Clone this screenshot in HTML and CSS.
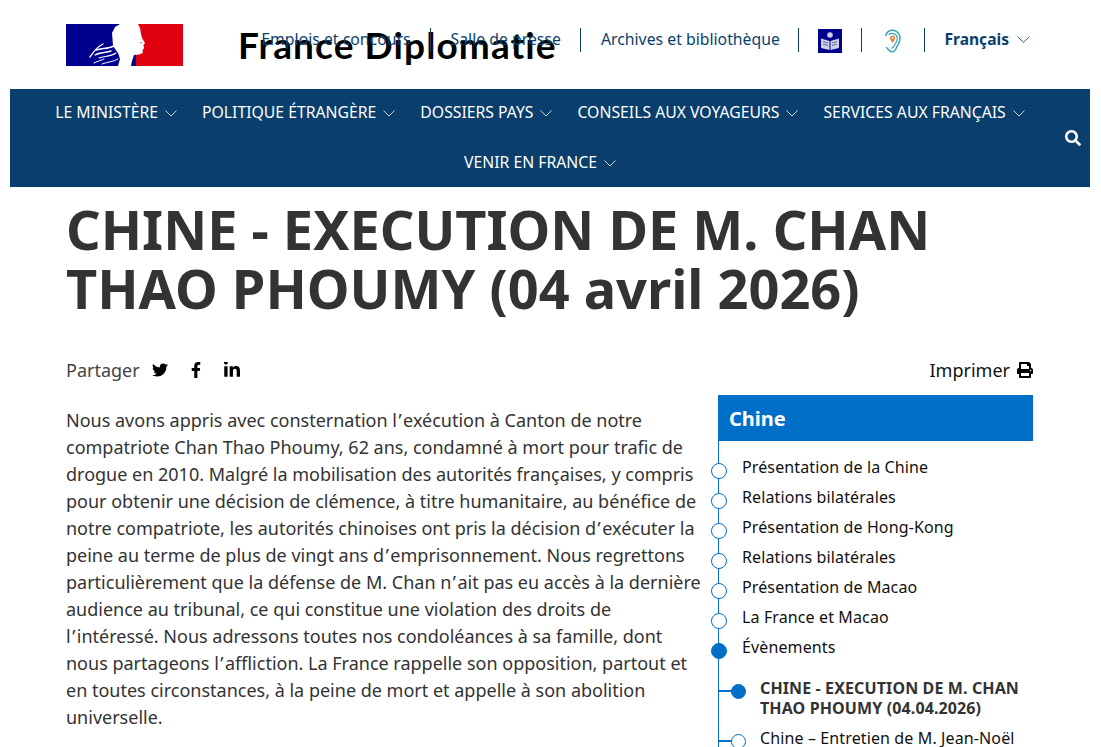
FILE: index.html
```html
<!DOCTYPE html>
<html lang="fr">
<head>
<meta charset="utf-8">
<title>Chine - Execution de M. Chan Thao Phoumy</title>
<link rel="stylesheet" href="styles.css">
</head>
<body>
<header class="top">
  <a class="marianne" href="#" aria-label="République française">
    <svg width="117" height="42" viewBox="0 0 117 42">
      <rect width="117" height="42" fill="#00008f"/>
      <rect x="70" width="47" height="42" fill="#e1000f"/>
      <path d="M54 0H72L74 4 75 10 76 14 79 19 77.500 21 78 24 76.500 26.500 76.800 29 73 30.500 68 31 66 37 65 42H52L54 35 52 29 47 22 46.500 15 46 9 49 3Z" fill="#fff"/>
      <path d="M73 18.500l4-.7-1.500 1.800z" fill="#9a9aa8"/>
      <g fill="none" stroke="#fff" stroke-linecap="round">
        <path d="M24 33C28 28 30 23 37 20" stroke-width="1.300"/>
        <path d="M30 26C36 24 42 25 48 22" stroke-width="1.600"/>
        <path d="M29 31C34 28 40 29 45 27" stroke-width="1.400"/>
        <path d="M33 34C38 32 44 33 50 29" stroke-width="1.100"/>
        <path d="M28 39C32 37 36 36 38 35" stroke-width="1"/>
        <path d="M36 40C41 38 47 38 52 35" stroke-width="1"/>
      </g>
    </svg>
  </a>
  <a class="brand" href="#">France Diplomatie</a>
  <nav class="tools">
    <a class="tool" href="#">Emplois et concours</a>
    <a class="tool" href="#">Salle de presse</a>
    <a class="tool tool-archives" href="#">Archives et bibliothèque</a>
    <a class="tool tool-book" href="#" aria-label="Facile à lire">
      <svg class="tool-icon" width="24" height="24" viewBox="0 0 24 24">
        <rect width="24" height="24" fill="#00008f"/>
        <circle cx="12" cy="6" r="2.800" fill="#cfcfe6"/>
        <path d="M3 9.500 11.500 12V21L3 19ZM21 9.500 12.500 12V21L21 19Z" fill="#cfcfe6"/>
        <path d="M5 12.500 10 14M5 15 10 16.500M14 14 19 12.500M14 16.500 19 15" stroke="#6a6aa8" stroke-width="1"/>
      </svg>
    </a>
    <a class="tool tool-ear" href="#" aria-label="Accessibilité auditive">
      <svg class="tool-icon" width="20" height="24" viewBox="0 0 20 24">
        <path d="M3.500 18.500C5 19.500 5.800 22.800 9 22.800 12.500 22.800 13 19.500 14 17.500 15.500 14.500 17 13.500 17 9 17 4.500 13.500 1.200 9.500 1.200 6 1.200 3.600 3.500 2.800 6.500" fill="none" stroke="#3aa6b9" stroke-width="1.500" stroke-linecap="round"/>
        <path d="M6 5.500C8 3.500 13.800 4 14.300 9 14.600 12.500 12.300 14 11.300 16.500 10.800 18 10 19.300 8.500 19" fill="none" stroke="#3aa6b9" stroke-width="1.200" stroke-linecap="round"/>
        <path d="M9.500 14 7.300 10.500A2.600 2.600 0 1 1 11.700 10.500Z" fill="#ec7a2d"/>
        <circle cx="9.500" cy="9" r="1" fill="#fff"/>
      </svg>
    </a>
    <a class="tool lang" href="#">Français
      <svg class="chev-lang" width="13" height="7" viewBox="0 0 13 7"><path d="M.5.500 6.500 6.500 12.500.500" fill="none" stroke="#3e6487" stroke-width="1"/></svg>
    </a>
  </nav>
</header>

<nav class="mainnav">
  <ul class="menu">
    <li class="menu-item">LE MINISTÈRE<svg class="chev" width="12" height="7" viewBox="0 0 12 7"><path d="M.5.500 6 6 11.500.500" fill="none" stroke="#c9d6e2" stroke-width="1"/></svg></li>
    <li class="menu-item">POLITIQUE ÉTRANGÈRE<svg class="chev" width="12" height="7" viewBox="0 0 12 7"><path d="M.5.500 6 6 11.500.500" fill="none" stroke="#c9d6e2" stroke-width="1"/></svg></li>
    <li class="menu-item">DOSSIERS PAYS<svg class="chev" width="12" height="7" viewBox="0 0 12 7"><path d="M.5.500 6 6 11.500.500" fill="none" stroke="#c9d6e2" stroke-width="1"/></svg></li>
    <li class="menu-item">CONSEILS AUX VOYAGEURS<svg class="chev" width="12" height="7" viewBox="0 0 12 7"><path d="M.5.500 6 6 11.500.500" fill="none" stroke="#c9d6e2" stroke-width="1"/></svg></li>
    <li class="menu-item">SERVICES AUX FRANÇAIS<svg class="chev" width="12" height="7" viewBox="0 0 12 7"><path d="M.5.500 6 6 11.500.500" fill="none" stroke="#c9d6e2" stroke-width="1"/></svg></li>
    <li class="menu-item">VENIR EN FRANCE<svg class="chev" width="12" height="7" viewBox="0 0 12 7"><path d="M.5.500 6 6 11.500.500" fill="none" stroke="#c9d6e2" stroke-width="1"/></svg></li>
  </ul>
  <svg class="search" width="16" height="16" viewBox="0 0 512 512"><path fill="#fff" d="M505 442.700L405.300 343c-4.500-4.500-10.600-7-17-7H372c27.600-35.300 44-79.700 44-128C416 93.100 322.900 0 208 0S0 93.100 0 208s93.100 208 208 208c48.300 0 92.700-16.400 128-44v16.300c0 6.400 2.500 12.500 7 17l99.700 99.700c9.400 9.400 24.600 9.400 33.900 0l28.300-28.300c9.400-9.400 9.400-24.600.1-34zM208 336c-70.700 0-128-57.200-128-128 0-70.700 57.200-128 128-128 70.700 0 128 57.200 128 128 0 70.700-57.200 128-128 128z"/></svg>
</nav>

<main class="page">
  <h1 class="title">CHINE - EXECUTION DE M. CHAN THAO PHOUMY (04 avril 2026)</h1>
  <div class="actions">
    <div class="share">
      <span class="share-label">Partager</span>
      <svg class="share-icon" width="16" height="16" viewBox="0 0 512 512"><path d="M459.370 151.716c.325 4.548.325 9.097.325 13.645 0 138.720-105.583 298.558-298.558 298.558-59.452 0-114.680-17.219-161.137-47.106 8.447.974 16.568 1.299 25.340 1.299 49.055 0 94.213-16.568 130.274-44.832-46.132-.975-84.792-31.188-98.112-72.772 6.498.974 12.995 1.624 19.818 1.624 9.421 0 18.843-1.300 27.614-3.573-48.081-9.747-84.143-51.980-84.143-102.985v-1.299c13.969 7.797 30.214 12.670 47.431 13.319-28.264-18.843-46.781-51.005-46.781-87.391 0-19.492 5.197-37.360 14.294-52.954 51.655 63.675 129.300 105.258 216.365 109.807-1.624-7.797-2.599-15.918-2.599-24.040 0-57.828 46.782-104.934 104.934-104.934 30.213 0 57.502 12.670 76.670 33.137 23.715-4.548 46.456-13.320 66.599-25.340-7.798 24.366-24.366 44.833-46.132 57.827 21.117-2.273 41.584-8.122 60.426-16.243-14.292 20.791-32.161 39.308-52.628 54.253z"/></svg>
      <svg class="share-icon" width="10" height="16" viewBox="0 0 320 512"><path d="M279.140 288l14.220-92.660h-88.910v-60.130c0-25.350 12.420-50.060 52.240-50.060h40.420V6.260S260.430 0 225.360 0c-73.220 0-121.080 44.380-121.080 124.720v70.620H22.890V288h81.390v224h100.170V288z"/></svg>
      <svg class="share-icon" width="16" height="16" viewBox="0 32 448 448"><path d="M100.280 448H7.400V148.900h92.880zM53.790 108.100C24.090 108.100 0 83.500 0 53.800a53.790 53.790 0 0 1 107.580 0c0 29.700-24.100 54.300-53.790 54.300zM447.900 448h-92.680V302.400c0-34.700-.7-79.200-48.290-79.200-48.290 0-55.690 37.700-55.690 76.700V448h-92.780V148.900h89.080v40.800h1.300c12.400-23.500 42.690-48.300 87.880-48.300 94 0 111.280 61.900 111.280 142.300V448z"/></svg>
    </div>
    <div class="print">
      <span>Imprimer</span>
      <svg width="16" height="16" viewBox="0 0 512 512"><path d="M448 192V77.250c0-8.490-3.370-16.620-9.370-22.630L393.370 9.370c-6-6-14.140-9.370-22.630-9.370H96C78.330 0 64 14.330 64 32v160c-35.350 0-64 28.650-64 64v112c0 8.840 7.160 16 16 16h48v96c0 17.670 14.330 32 32 32h320c17.670 0 32-14.330 32-32v-96h48c8.840 0 16-7.160 16-16V256c0-35.350-28.650-64-64-64zm-64 256H128v-96h256v96zm0-224H128V64h192v48c0 8.840 7.160 16 16 16h48v96zm48 72c-13.250 0-24-10.750-24-24 0-13.260 10.750-24 24-24s24 10.740 24 24c0 13.250-10.750 24-24 24z"/></svg>
    </div>
  </div>
  <div class="columns">
    <article class="article">
      <p>Nous avons appris avec consternation l<span class="apos">’</span>exécution à Canton de notre compatriote Chan Thao Phoumy, 62 ans, condamné à mort pour trafic de drogue en 2010. Malgré la mobilisation des autorités françaises, y compris pour obtenir une décision de clémence, à titre humanitaire, au bénéfice de notre compatriote, les autorités chinoises ont pris la décision d<span class="apos">’</span>exécuter la peine au terme de plus de vingt ans d<span class="apos">’</span>emprisonnement. Nous regrettons particulièrement que la défense de M. Chan n<span class="apos">’</span>ait pas eu accès à la dernière audience au tribunal, ce qui constitue une violation des droits de l<span class="apos">’</span>intéressé. Nous adressons toutes nos condoléances à sa famille, dont nous partageons l<span class="apos">’</span>affliction. La France rappelle son opposition, partout et en toutes circonstances, à la peine de mort et appelle à son abolition universelle.</p>
    </article>
    <aside class="side">
      <h2 class="side-title">Chine</h2>
      <ul class="tree">
        <li class="node">Présentation de la Chine</li>
        <li class="node">Relations bilatérales</li>
        <li class="node">Présentation de Hong-Kong</li>
        <li class="node">Relations bilatérales</li>
        <li class="node">Présentation de Macao</li>
        <li class="node">La France et Macao</li>
        <li class="node node-on">Évènements
          <ul class="subtree">
            <li class="sub sub-on">CHINE - EXECUTION DE M. CHAN THAO PHOUMY (04.04.2026)</li>
            <li class="sub">Chine – Entretien de M. Jean-Noël</li>
          </ul>
        </li>
      </ul>
    </aside>
  </div>
</main>
</body>
</html>
```

FILE: styles.css
```css
* { box-sizing: border-box; }
html { height: 747px; overflow: hidden; }
body {
  margin: 0;
  background: #fff;
  font-family: "Noto Sans", sans-serif;
  color: #333;
}
a { color: inherit; text-decoration: none; }
ul { list-style: none; margin: 0; padding: 0; }

.top {
  position: relative;
  height: 89px;
  padding: 24px 71px 0 66px;
  display: flex;
  justify-content: space-between;
  align-items: flex-start;
}
.marianne { display: block; height: 42px; }
.marianne svg { display: block; }
.brand {
  position: absolute;
  left: 238px;
  top: 23px;
  font-family: Lato, sans-serif;
  font-weight: 700;
  font-size: 37px;
  letter-spacing: 1.100px;
  line-height: 44px;
  color: #000;
}
.tools {
  position: relative;
  display: flex;
  align-items: center;
  margin-top: 4px;
  color: #0a3f6d;
  font-size: 15.800px;
}
.tool {
  display: flex;
  align-items: center;
  height: 24px;
  padding: 0 19px 2px 20px;
  border-left: 1px solid #0a3f6d;
  white-space: nowrap;
}
.tool:first-child { border-left: 0; }
.tool-archives { padding-right: 18.500px; }
.tool-book { padding: 2px 19px 0 19px; }
.tool-ear { padding: 2px 21px 0 21px; }
.tool-icon { display: block; }
.lang { font-weight: 700; font-size: 15.600px; padding-left: 19px; padding-right: 0; }
.chev-lang { display: block; flex: none; margin-left: 8px; margin-top: 0; }

.mainnav {
  margin: 0 11px 0 10px;
  height: 98px;
  background: #093e6d;
  display: flex;
  align-items: center;
  color: #fff;
}
.menu {
  flex: 1;
  margin: -2px -5px 0 0;
  display: flex;
  flex-wrap: wrap;
  justify-content: center;
}
.menu-item {
  height: 50px;
  padding: 0 12.500px;
  display: flex;
  align-items: center;
  font-size: 15.750px;
  white-space: nowrap;
}
.chev { display: block; flex: none; margin-left: 7px; margin-top: 3px; }
.search { display: block; flex: none; margin-right: 9px; }

.page { padding: 0 68px 0 66px; }
.title {
  margin: 13px 0 0;
  font-size: 54.100px;
  line-height: 59px;
  font-weight: 700;
  color: #333;
}
.actions {
  margin-top: 38px;
  display: flex;
  justify-content: space-between;
  align-items: center;
  height: 27px;
  font-size: 18px;
}
.share { display: flex; align-items: center; }
.share-label { color: #444; margin-right: 12px; }
.share-icon { display: block; margin-right: 23px; fill: #000; }
.print { display: flex; align-items: center; gap: 7px; color: #111; }
.print svg { display: block; fill: #000; }

.columns { margin-top: 12px; display: flex; justify-content: space-between; align-items: flex-start; }
.article { width: 636px; font-size: 18px; line-height: 27px; color: #333; }
.article p { margin: 12px 0 0; }
.apos { margin: 0 1.500px; }

.side { width: 315px; color: #111; font-size: 16px; }
.side-title {
  margin: 0;
  height: 46px;
  padding: 0 11px;
  background: #006fc8;
  color: #fff;
  font-size: 20px;
  line-height: 47px;
  font-weight: 700;
}
.tree { border-left: 1.500px solid #0a6fc8; padding: 11px 0 0 23px; }
.node { position: relative; line-height: 30px; letter-spacing: .12px; }
.node::before {
  content: "";
  position: absolute;
  left: -31px;
  top: 10.500px;
  width: 14px;
  height: 14px;
  border-radius: 50%;
  border: 1.800px solid #006fc8;
  background: #fff;
}
.node-on::before { background: #006fc8; }
.subtree { margin: 16px 0 0 18px; }
.sub { position: relative; line-height: 20px; margin-bottom: 10px; letter-spacing: .12px; }
.sub::before {
  content: "";
  position: absolute;
  left: -42px;
  top: 12px;
  width: 20px;
  height: 1.500px;
  background: #006fc8;
}
.sub::after {
  content: "";
  position: absolute;
  left: -29px;
  top: 5.500px;
  width: 13px;
  height: 13px;
  border-radius: 50%;
  border: 1.800px solid #006fc8;
  background: #fff;
}
.sub-on { font-weight: 700; color: #333; }
.sub-on::after { background: #006fc8; }
```
